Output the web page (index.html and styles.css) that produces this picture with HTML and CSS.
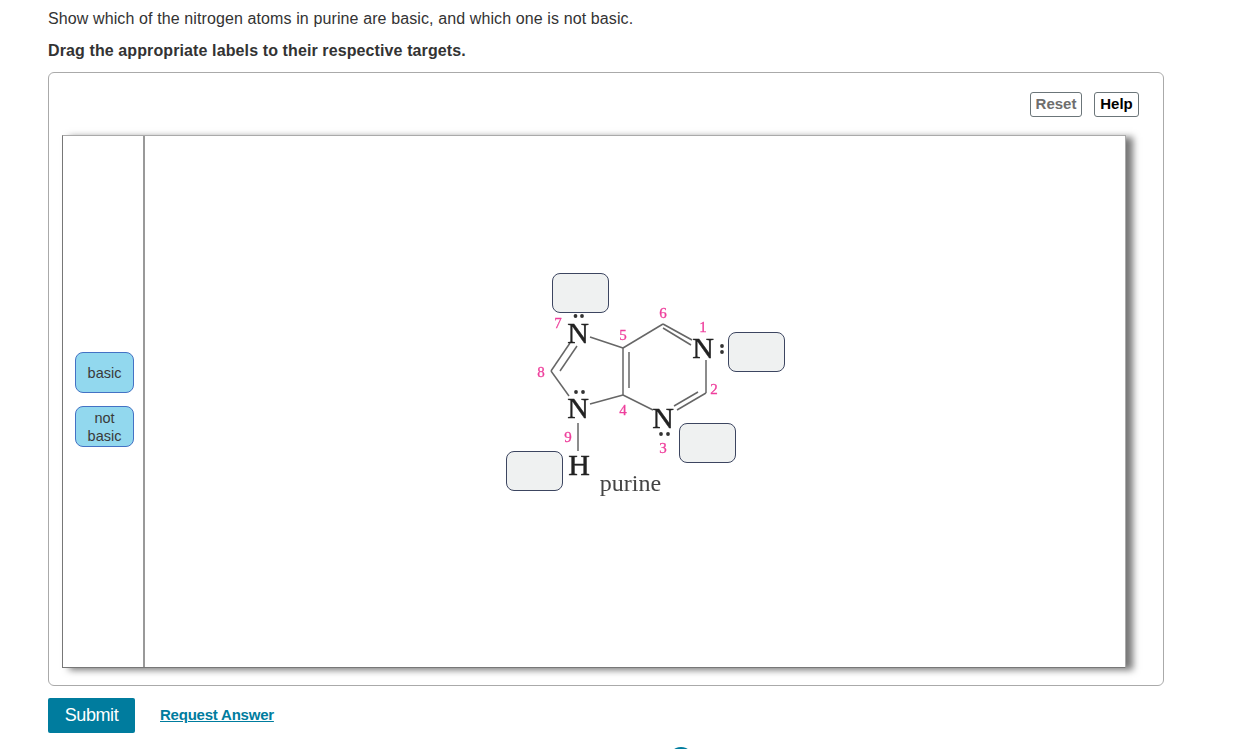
FILE: index.html
```html
<!DOCTYPE html>
<html lang="en">
<head>
    <meta charset="UTF-8">
    <meta name="viewport" content="width=device-width, initial-scale=1.0">
    <title>Purine Labels</title>
    <link rel="stylesheet" href="styles.css">
</head>
<body>
    <p class="prompt">Show which of the nitrogen atoms in purine are basic, and which one is not basic.</p>
    <p class="instruction">Drag the appropriate labels to their respective targets.</p>

    <div class="panel">
        <div class="toolbar">
            <button class="tool-btn tool-reset">Reset</button>
            <button class="tool-btn tool-help">Help</button>
        </div>
        <div class="canvas">
            <div class="tray">
                <div class="label">basic</div>
                <div class="label">not basic</div>
            </div>
            <div class="stage">
                <svg class="molecule" width="980" height="531" viewBox="145 136 980 531">
                    <g class="bonds">
                        <line x1="590" y1="337" x2="623" y2="348"/>
                        <line x1="623" y1="348" x2="663" y2="324"/>
                        <line x1="663" y1="324" x2="692" y2="340"/>
                        <line x1="663" y1="328" x2="691" y2="345"/>
                        <line x1="706" y1="360" x2="706" y2="393"/>
                        <line x1="706" y1="393" x2="677" y2="410"/>
                        <line x1="698" y1="392" x2="674" y2="406"/>
                        <line x1="653" y1="410" x2="623" y2="395"/>
                        <line x1="623" y1="348" x2="623" y2="395"/>
                        <line x1="629" y1="352" x2="629" y2="388"/>
                        <line x1="623" y1="395" x2="590" y2="404"/>
                        <line x1="570" y1="343" x2="551" y2="371"/>
                        <line x1="577" y1="346" x2="560" y2="371"/>
                        <line x1="551" y1="371" x2="569" y2="396"/>
                        <line x1="578" y1="423" x2="578" y2="451"/>
                    </g>
                    <g class="atoms">
                        <text x="578" y="343">N</text>
                        <text x="703" y="358">N</text>
                        <text x="578" y="418">N</text>
                        <text x="663" y="428">N</text>
                        <text x="579" y="475">H</text>
                    </g>
                    <g class="lone-pairs">
                        <circle cx="575.5" cy="316" r="1.9"/><circle cx="582" cy="316" r="1.9"/>
                        <circle cx="576" cy="392" r="1.9"/><circle cx="583" cy="392" r="1.9"/>
                        <circle cx="661" cy="434" r="1.9"/><circle cx="668" cy="434" r="1.9"/>
                        <circle cx="722" cy="346" r="1.9"/><circle cx="722" cy="352" r="1.9"/>
                    </g>
                    <g class="numbers">
                        <text x="703" y="332">1</text>
                        <text x="714" y="394">2</text>
                        <text x="663" y="453">3</text>
                        <text x="623" y="415">4</text>
                        <text x="623" y="340">5</text>
                        <text x="663" y="318">6</text>
                        <text x="558" y="328">7</text>
                        <text x="541" y="377">8</text>
                        <text x="568" y="442">9</text>
                    </g>
                    <text class="caption" x="630.5" y="491">purine</text>
                </svg>
                <div class="target target-n7"></div>
                <div class="target target-n1"></div>
                <div class="target target-n3"></div>
                <div class="target target-n9"></div>
            </div>
        </div>
    </div>

    <div class="actions">
        <button class="submit">Submit</button>
        <a class="request" href="#">Request Answer</a>
    </div>
    <div class="page-dot"></div>
</body>
</html>
```

FILE: styles.css
```css
html, body {
    height: 749px;
    overflow: hidden;
}

body {
    margin: 0;
    padding: 10px 89px 0 48px;
    position: relative;
    font-family: "Liberation Sans", Arial, sans-serif;
    font-size: 16px;
    color: #333;
    background: #fff;
}

.prompt {
    margin: 0;
    line-height: 18px;
    letter-spacing: 0.11px;
}

.instruction {
    margin: 14px 0 0;
    line-height: 18px;
    font-weight: bold;
    letter-spacing: 0.11px;
}

.panel {
    margin-top: 12px;
    height: 614px;
    box-sizing: border-box;
    border: 1px solid #aaa;
    border-radius: 6px;
    padding: 19px 24px 0 13px;
}

.toolbar {
    display: flex;
    justify-content: flex-end;
    gap: 12px;
    height: 43px;
}

.tool-btn {
    height: 25px;
    padding: 0 0 2px;
    border: 1px solid #6b7579;
    border-radius: 3px;
    background: #fff;
    font-family: "Liberation Sans", Arial, sans-serif;
    font-size: 15px;
    font-weight: bold;
    color: #000;
}

.tool-reset {
    width: 52px;
    color: #6e6e6e;
}

.tool-help {
    width: 45px;
}

.canvas {
    display: flex;
    width: 1064px;
    height: 533px;
    box-sizing: border-box;
    border: 1px solid #aaa;
    border-bottom-color: #777;
    border-left-color: #777;
    box-shadow: 7px 2px 7px #777;
    background: #fff;
}

.tray {
    width: 82px;
    flex-shrink: 0;
    box-sizing: border-box;
    border-right: 2px solid #999;
    padding: 0 0 4px 12px;
    display: flex;
    flex-direction: column;
    justify-content: center;
    gap: 13px;
}

.label {
    width: 59px;
    height: 41px;
    box-sizing: border-box;
    border: 1px solid #4472c4;
    border-radius: 8px;
    background: #92d8ee;
    display: flex;
    align-items: center;
    justify-content: center;
    text-align: center;
    font-size: 14.5px;
    line-height: 18px;
    color: #3a3a3a;
    padding: 0 8px;
}

.stage {
    flex: 1;
    position: relative;
}

.molecule {
    display: block;
    filter: blur(0.4px);
}

.bonds line {
    stroke: #666;
    stroke-width: 1.5;
}

.atoms text {
    font-family: "Liberation Serif", "Times New Roman", serif;
    font-size: 30px;
    fill: #222;
    stroke: #222;
    stroke-width: 0.4;
    text-anchor: middle;
}

.lone-pairs circle {
    fill: #333;
}

.numbers text {
    font-family: "Liberation Serif", "Times New Roman", serif;
    font-size: 15px;
    fill: #ee3f9c;
    stroke: #ee3f9c;
    stroke-width: 0.3;
    text-anchor: middle;
}

.caption {
    font-family: "Liberation Serif", "Times New Roman", serif;
    font-size: 24px;
    fill: #444;
    text-anchor: middle;
}

.target {
    position: absolute;
    width: 57px;
    height: 40px;
    box-sizing: border-box;
    border: 1.5px solid #3c4560;
    border-radius: 8px;
    background: #eff1f1;
}

.target-n7 { left: 407px; top: 137px; }
.target-n1 { left: 583px; top: 196px; }
.target-n3 { left: 534px; top: 287px; }
.target-n9 { left: 361px; top: 315px; }

.actions {
    margin-top: 12px;
    display: flex;
    align-items: center;
    gap: 25px;
}

.submit {
    width: 87px;
    height: 35px;
    border: none;
    border-radius: 2px;
    background: #007c9e;
    color: #fff;
    font-family: "Liberation Sans", Arial, sans-serif;
    font-size: 18px;
    letter-spacing: -0.4px;
}

.request {
    font-size: 15px;
    font-weight: bold;
    letter-spacing: -0.22px;
    color: #007c9e;
    margin-top: -2px;
}

.page-dot {
    position: absolute;
    left: 668px;
    top: 747px;
    width: 26px;
    height: 26px;
    border-radius: 50%;
    background: #007c9e;
}
```
